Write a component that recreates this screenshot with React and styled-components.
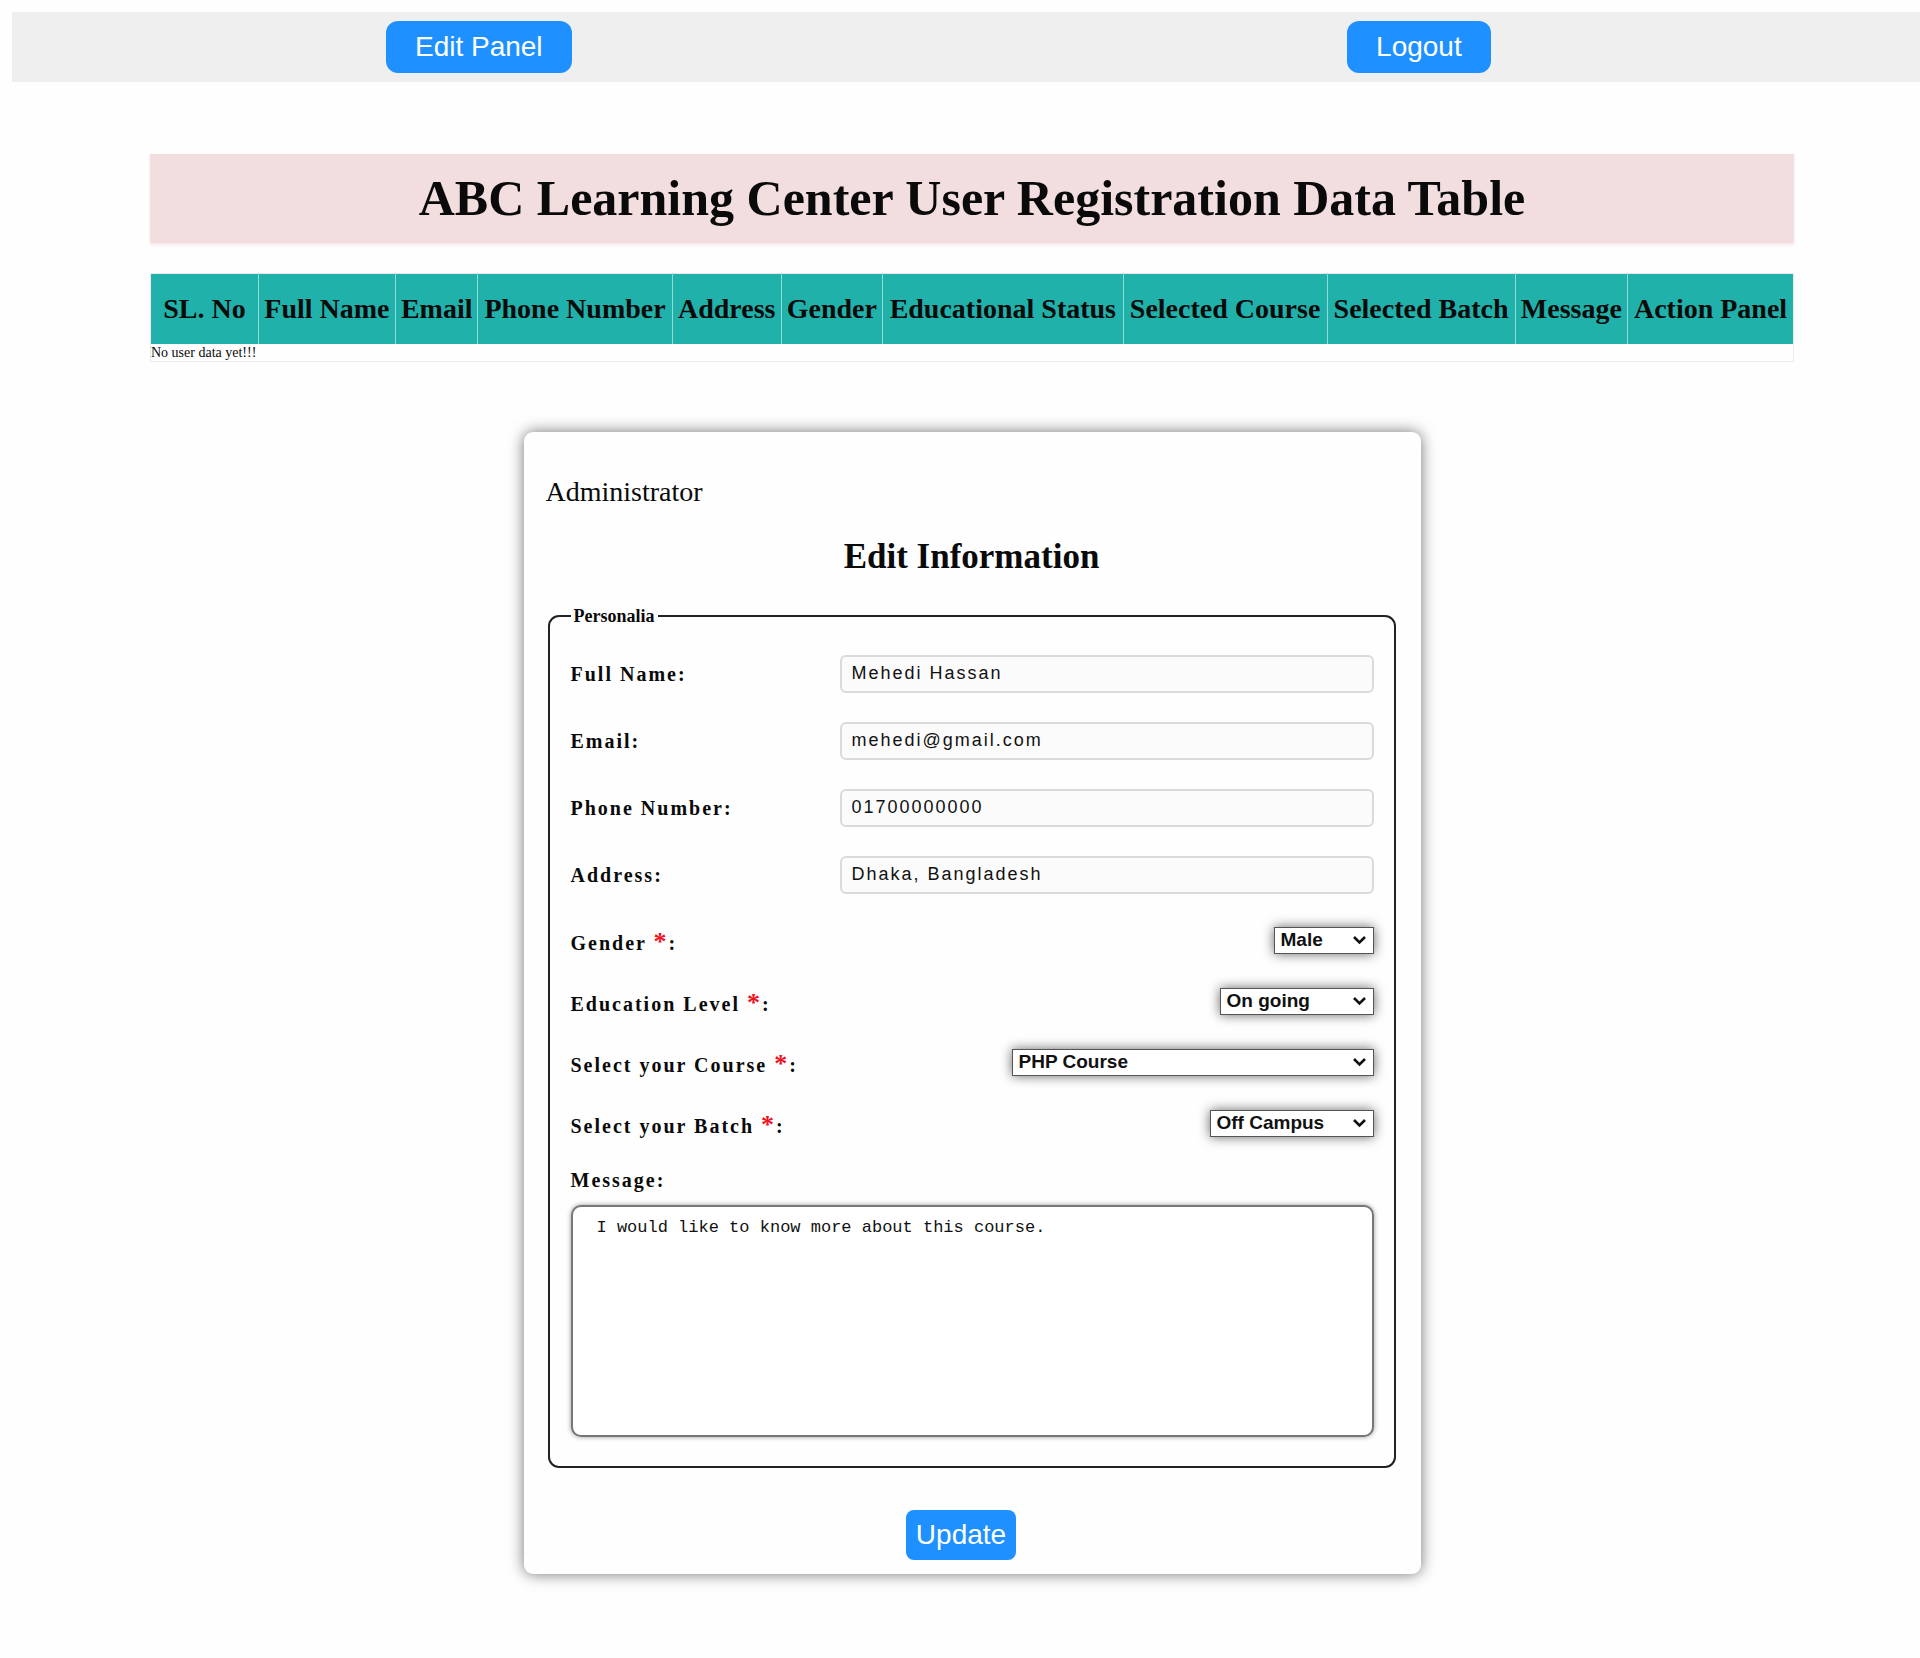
import React from "react";
import styled, { createGlobalStyle } from "styled-components";

const GlobalStyle = createGlobalStyle`
  *, *::before, *::after { box-sizing: border-box; }
  body {
    margin: 12px 0 0 12px;
    background: #fefefe;
    color: #0a0a0a;
    font-family: "Liberation Serif", "Times New Roman", serif;
  }
`;

const serif = `"Liberation Serif", "Times New Roman", serif`;
const sans = `"Liberation Sans", Arial, sans-serif`;
const mono = `"Liberation Mono", Consolas, monospace`;

const NavBar = styled.nav`
  display: flex;
  justify-content: space-between;
  padding: 9px 22.5% 9px 19.6%;
  background: #efefef;
`;

const Button = styled.button`
  height: ${(p) => (p.$compact ? 50 : 52)}px;
  padding: 0 ${(p) => (p.$compact ? 10 : 29)}px;
  border: 0;
  border-radius: ${(p) => (p.$compact ? 8 : 12)}px;
  background: #1e90ff;
  color: #fff;
  font: 28px/32px ${sans};
  cursor: pointer;
`;

const Main = styled.main`
  padding: 72px 126px 72px 138px;
`;

const PageTitle = styled.h1`
  margin: 0 0 30px;
  padding: 16px;
  background: #f2dede;
  box-shadow: 0 2px 3px #f6e6ea;
  font-size: 50px;
  line-height: 57px;
  text-align: center;
`;

const DataTable = styled.table`
  width: 100%;
  border-collapse: collapse;
  border: 1px solid #eaeaea;
`;

const HeadCell = styled.th`
  height: 70px;
  padding: 0 4px;
  background: #20b2aa;
  border-right: 1px solid #8fdcd6;
  font-size: 28px;
  line-height: 32px;
  white-space: nowrap;
  &:first-child { padding: 0 11px; }
  &:last-child { border-right: 0; }
`;

const EmptyCell = styled.td`
  padding: 0;
  font-size: 14px;
  line-height: 17px;
`;

const Card = styled.form`
  max-width: 897px;
  margin: 70px auto 0;
  padding: 44px 25px 14px 24px;
  border-radius: 9px;
  box-shadow: 0 0 15px rgba(0, 0, 0, 0.55);
`;

const Role = styled.p`
  margin: 0 0 0 -2px;
  font-size: 28px;
  line-height: 32px;
`;

const CardTitle = styled.h2`
  margin: 29px 0;
  font-size: 35px;
  line-height: 40px;
  text-align: center;
`;

const Fieldset = styled.fieldset`
  display: flex;
  flex-direction: column;
  margin: 0;
  padding: 29px 20px 29px 21px;
  border: 2px solid #222;
  border-radius: 11px;
`;

const Legend = styled.legend`
  padding: 0 3px;
  font-size: 18px;
  font-weight: bold;
  line-height: 20px;
`;

const FieldGroup = styled.div`
  display: flex;
  flex-direction: column;
  gap: ${(p) => (p.$selects ? 34 : 29)}px;
  margin: ${(p) => (p.$selects ? "33px 0 31px" : "0")};
`;

const Field = styled.div`
  display: flex;
  align-items: center;
  justify-content: space-between;
  height: ${(p) => (p.$tall ? 38 : 27)}px;
`;

const Label = styled.label`
  padding-top: ${(p) => (p.$lowered ? 5 : 0)}px;
  font: bold 20px/24px ${serif};
  letter-spacing: 2px;
`;

const Required = styled.span`
  color: #f01020;
  font-size: 26px;
  line-height: 20px;
`;

const TextInput = styled.input`
  width: 66.5%;
  height: 38px;
  padding: 0 10px;
  border: 2px solid #dadada;
  border-radius: 6px;
  background: #fbfbfb;
  color: #111;
  font: 18px/24px ${sans};
  letter-spacing: 2px;
`;

const SelectBox = styled.div`
  position: relative;
  width: ${(p) => p.$width}px;
`;

const Select = styled.select`
  display: block;
  appearance: none;
  width: 100%;
  height: 27px;
  padding: 0 6px;
  border: 1px solid #555;
  border-radius: 0;
  background: #fff;
  box-shadow: 0 0 12px rgba(0, 0, 0, 0.6);
  color: #111;
  font: bold 19px/24px ${sans};
`;

const Chevron = styled.svg`
  position: absolute;
  right: 8px;
  top: 8px;
  pointer-events: none;
`;

const Message = styled.textarea`
  height: 232px;
  margin-top: 13px;
  padding: 10px 24px;
  border: 2px solid #777;
  border-radius: 10px;
  box-shadow: 0 0 5px rgba(0, 0, 0, 0.4);
  background: #fff;
  color: #111;
  font: 17px/22px ${mono};
  resize: none;
`;

const Actions = styled.div`
  display: flex;
  justify-content: center;
  margin-top: 42px;
  padding-right: 21px;
`;

const columns = [
  "SL. No", "Full Name", "Email", "Phone Number", "Address", "Gender",
  "Educational Status", "Selected Course", "Selected Batch", "Message", "Action Panel",
];

const textFields = [
  { id: "name", label: "Full Name:", value: "Mehedi Hassan", type: "text" },
  { id: "email", label: "Email:", value: "mehedi@gmail.com", type: "email" },
  { id: "phone", label: "Phone Number:", value: "01700000000", type: "tel" },
  { id: "address", label: "Address:", value: "Dhaka, Bangladesh", type: "text" },
];

const selectFields = [
  { id: "gender", label: "Gender", value: "Male", width: 100 },
  { id: "education", label: "Education Level", value: "On going", width: 154 },
  { id: "course", label: "Select your Course", value: "PHP Course", width: 362 },
  { id: "batch", label: "Select your Batch", value: "Off Campus", width: 164 },
];

export default function App() {
  return (
    <>
      <GlobalStyle />
      <NavBar>
        <Button type="button">Edit Panel</Button>
        <Button type="button">Logout</Button>
      </NavBar>
      <Main>
        <PageTitle>ABC Learning Center User Registration Data Table</PageTitle>
        <DataTable>
          <thead>
            <tr>
              {columns.map((name) => (
                <HeadCell key={name} scope="col">{name}</HeadCell>
              ))}
            </tr>
          </thead>
          <tbody>
            <tr>
              <EmptyCell colSpan={columns.length}>No user data yet!!!</EmptyCell>
            </tr>
          </tbody>
        </DataTable>
        <Card onSubmit={(e) => e.preventDefault()}>
          <Role>Administrator</Role>
          <CardTitle>Edit Information</CardTitle>
          <Fieldset>
            <Legend>Personalia</Legend>
            <FieldGroup>
              {textFields.map((f) => (
                <Field key={f.id} $tall>
                  <Label htmlFor={f.id}>{f.label}</Label>
                  <TextInput id={f.id} type={f.type} defaultValue={f.value} />
                </Field>
              ))}
            </FieldGroup>
            <FieldGroup $selects>
              {selectFields.map((f) => (
                <Field key={f.id}>
                  <Label htmlFor={f.id} $lowered>
                    {f.label} <Required>*</Required>:
                  </Label>
                  <SelectBox $width={f.width}>
                    <Select id={f.id} defaultValue={f.value}>
                      <option>{f.value}</option>
                    </Select>
                    <Chevron width="13" height="10" viewBox="0 0 13 10" aria-hidden="true">
                      <path d="M1 2 L6.5 7.5 L12 2" fill="none" stroke="#111" strokeWidth="2.6" />
                    </Chevron>
                  </SelectBox>
                </Field>
              ))}
            </FieldGroup>
            <Label htmlFor="message">Message:</Label>
            <Message id="message" spellCheck={false} defaultValue="I would like to know more about this course." />
          </Fieldset>
          <Actions>
            <Button type="submit" $compact>Update</Button>
          </Actions>
        </Card>
      </Main>
    </>
  );
}
